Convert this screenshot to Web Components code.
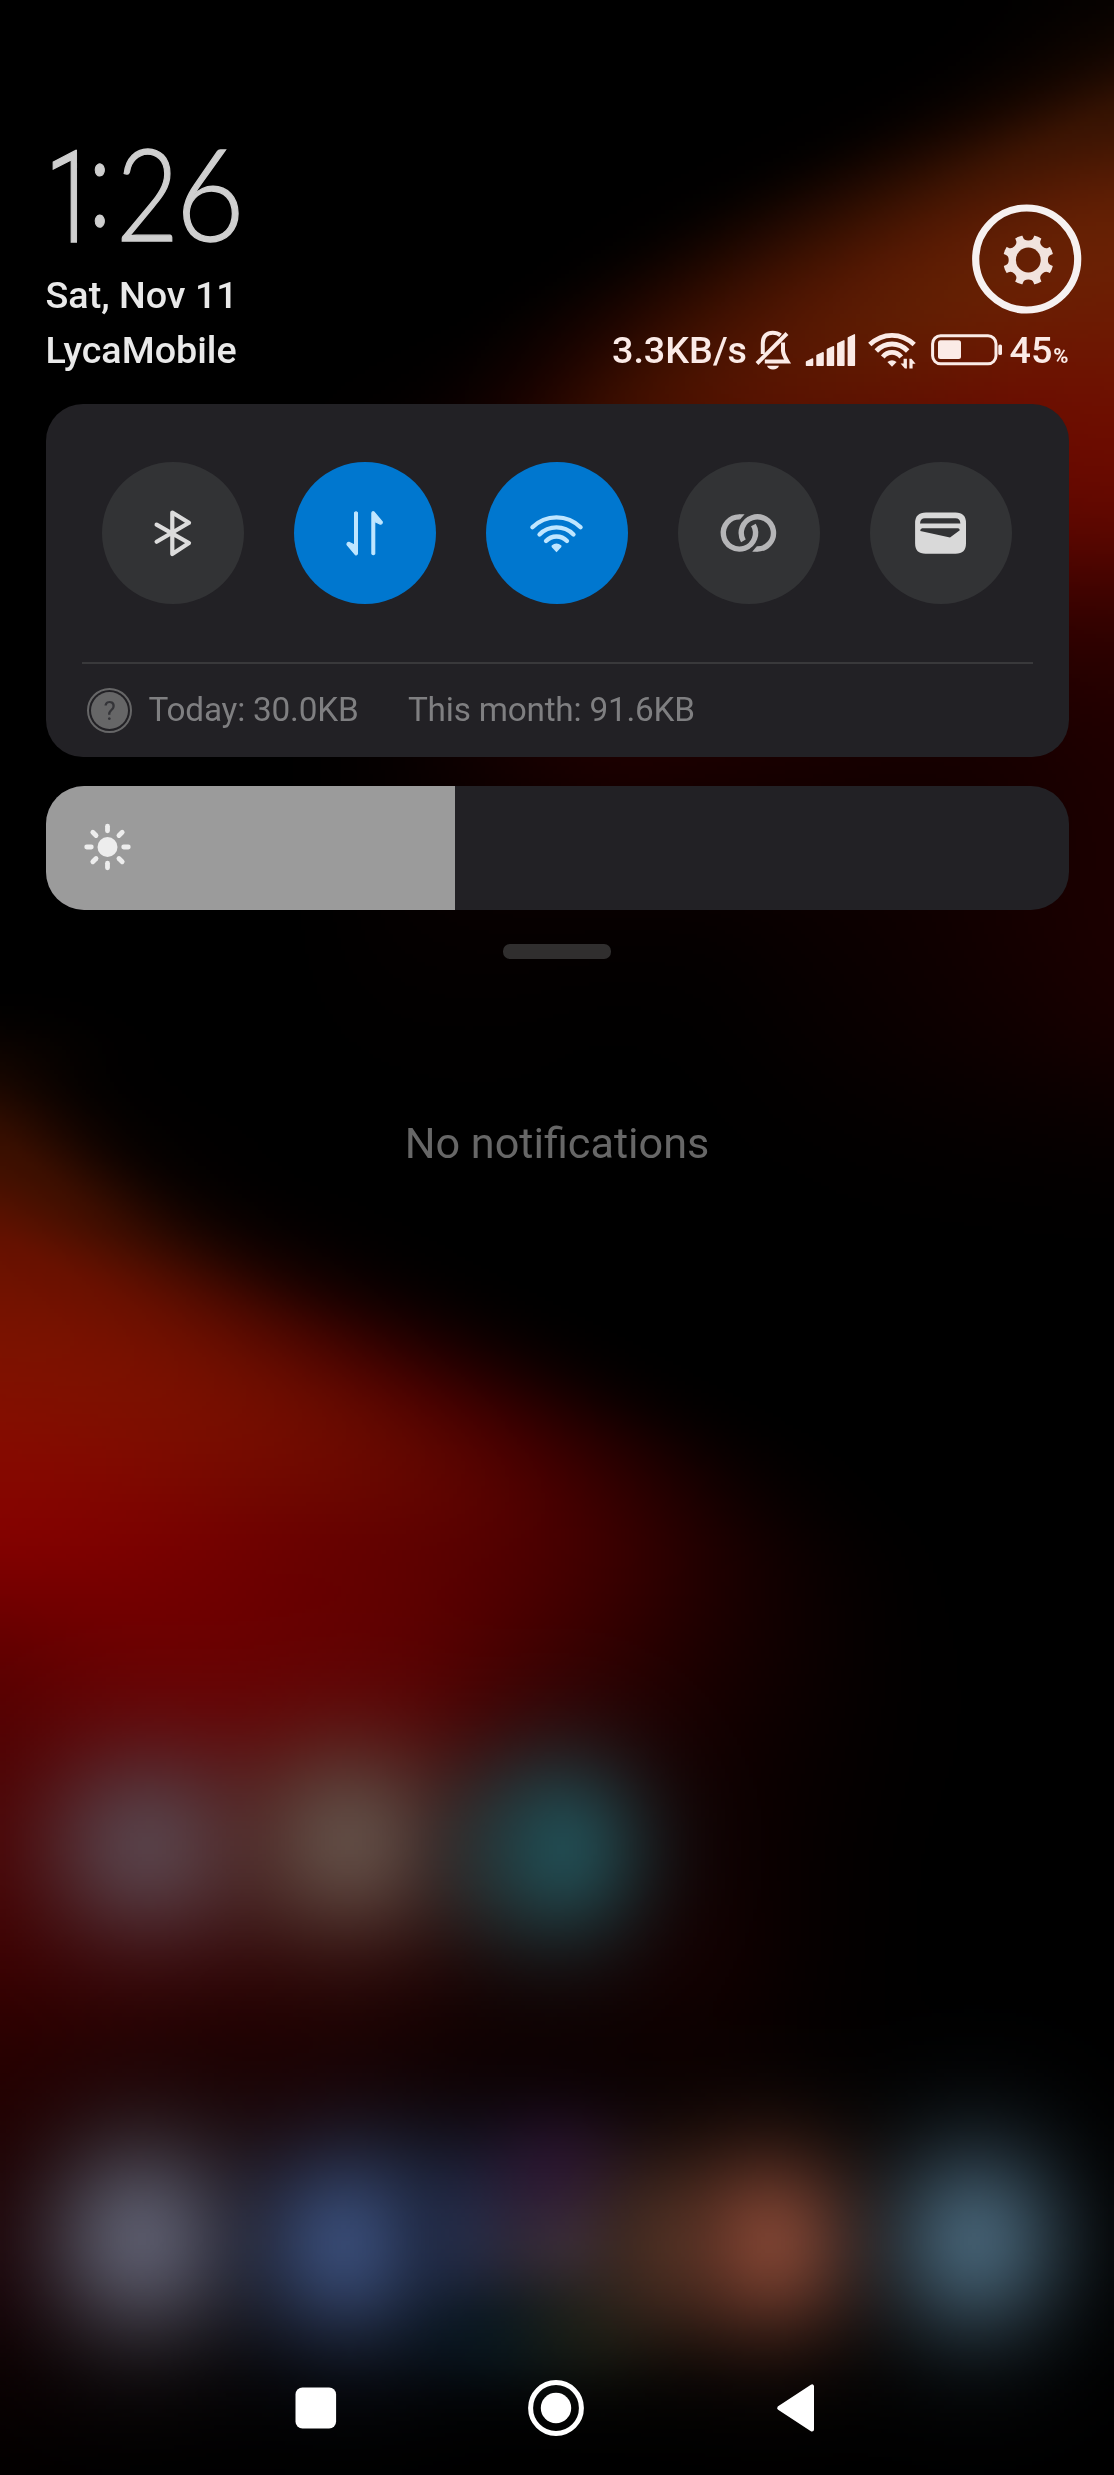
<!DOCTYPE html>
<html lang="en">
<head>
<meta charset="utf-8">
<title>Notification shade</title>
<style>
html,body{margin:0;padding:0;background:#000}
body{width:1114px;height:2475px;overflow:hidden;font-family:Roboto,"Noto Sans",sans-serif}
</style>
</head>
<body>
<shade-screen>
  <shade-header slot="header"></shade-header>
  <toggle-panel slot="content">
    <quick-toggle icon="bluetooth"></quick-toggle>
    <quick-toggle icon="data" on></quick-toggle>
    <quick-toggle icon="wifi" on></quick-toggle>
    <quick-toggle icon="link"></quick-toggle>
    <quick-toggle icon="wallet"></quick-toggle>
    <data-usage slot="footer"><span>Today: 30.0KB</span><span slot="month">This month: 91.6KB</span></data-usage>
  </toggle-panel>
  <brightness-slider slot="content"></brightness-slider>
  <drag-handle slot="content"></drag-handle>
  <empty-note slot="content">No notifications</empty-note>
  <nav-bar slot="nav"></nav-bar>
</shade-screen>
<script>
const define = (name, html, init) => {
  const tpl = document.createElement('template');
  tpl.innerHTML = html;
  customElements.define(name, class extends HTMLElement {
    constructor() {
      super();
      this.attachShadow({mode: 'open'}).appendChild(tpl.content.cloneNode(true));
    }
    connectedCallback() { if (init) init(this, this.shadowRoot); }
  });
};

// Wallpaper glow: a 12-column colour mesh, smoothly interpolated, with soft blobs over it.
const MESH = [
 '000 000 000 000 000 000 000 000 000 000 000 060200',
 '000 000 000 000 000 000 000 000 000 020000 160600 3a1503',
 '000 000 000 000 000 000 000 040100 220a01 431502 5e1d04 692105',
 '000 000 000 000 000 000 180400 3e1000 571803 612003 6c2003 6e1d03',
 '000 000 000 000 040000 180100 401000 551300 5c1200 610f00 6c0c00 6f0e00',
 '000 000 000 000 080000 1c0000 3c0500 4a0500 500500 580500 620700 640800',
 '000 000 000 000 080000 1c0000 300000 300000 300000 300000 320000 320200',
 '000 000 000 000 080000 180000 240000 200000 1c0000 180000 180000 200000',
 '000 000 000 000 060000 0c0000 100000 100000 100000 100000 150000 1c0000',
 '000 000 000 000 050000 060000 050000 050000 0a0000 0e0000 150000 1c0000',
 '000000 000 000 000 010000 010000 000 010000 060000 0b0000 100000 180000',
 '401200 060100 000 000 000 000 000 000 020000 040000 060000 080000',
 '6c1200 4a1000 140400 040000 000 000 000 000 000 000 000 000',
 '7e1300 7b1200 6a0f00 4c0600 280000 0c0000 000 000 000 000 000 000',
 '880c00 840d00 7c0e00 730c00 650800 4c0000 2a0000 0a0000 000 000 000 000',
 '860000 7f0000 750000 680000 600100 550000 400000 220000 0a0000 000 000 000',
 '600000 6b0000 6c0000 660000 5e0000 480000 320000 1c0000 0c0000 010000 000 000',
 '4e0000 5c0000 600000 5a0000 500000 360000 200000 120000 080000 010000 000 000',
 '480000 400000 380000 300000 280000 180000 140000 100000 060000 000 000 000',
 '3c0000 380000 300000 280000 200000 120000 140000 140000 060000 000 000 000',
 '260000 200000 1a0000 1a0000 120000 0c0000 0a0000 0a0000 030000 000 000 000',
 '1c0000 140000 100000 100000 080000 040000 040000 030000 000 000 000 000',
 '180004 100000 060000 040000 000 000 000 000 000 000 000 000',
 '0a0000 060000 030000 000 000 000 000 000 000 000 000 000',
 '020000 000 000 000 000 000 000 000 000 000 000 000'
].map(r => r.split(' ').map(h => h.length < 6 ? [0,0,0] : [0,2,4].map(k => parseInt(h.substr(k,2),16))));
// Columns the glow's edge drifts sideways per mesh row: [row, drift]
const DRIFT = [[0,-1],[1.5,-1.8],[2.5,-1.6],[3.5,-.9],[4.5,-.2],[5,0],[10,0],[10.7,.5],[11.5,1.2],[12.5,1.8],[13.5,1.7],[14.5,.8],[15.5,0],[25,0]];
const drift = y => {
  let i = 0;
  while (y > DRIFT[i+1][0]) i++;
  const t = (y-DRIFT[i][0])/(DRIFT[i+1][0]-DRIFT[i][0]);
  return DRIFT[i][1] + (DRIFT[i+1][1]-DRIFT[i][1])*t*t*(3-2*t);
};
// x, y, spread x, spread y, r, g, b, strength
const BLOBS = [
 [145,1845,78,72,88,66,74,.95],[348,1840,78,74,98,78,70,.95],[490,1850,50,60,48,54,54,.45],[562,1848,64,70,33,75,81,.97],
 [140,2238,72,74,90,90,106,.97],[348,2243,74,74,57,76,118,.97],
 [470,2235,58,64,34,48,82,.75],[565,2245,60,60,62,50,66,.85],[556,2165,54,46,54,22,64,.45],[500,2335,60,36,4,24,34,.6],
 [585,2325,56,44,30,36,18,.5],[660,2245,54,64,70,46,32,.75],
 [770,2242,68,70,124,66,49,.97],[975,2240,68,72,67,94,112,.97]
];
define('wall-paper', `<style>
:host{display:block}canvas{display:block;width:100%;height:100%}
</style><canvas width="279" height="619"></canvas>`, (el, root) => {
  const c = root.querySelector('canvas'), g = c.getContext('2d'), W = c.width, H = c.height;
  const img = g.createImageData(W, H), R = MESH.length, C = 12;
  const cl = (v, m) => Math.max(0, Math.min(m, v));
  // blend of Catmull-Rom and B-spline weights
  const w = t => {
    const t2=t*t,t3=t2*t;
    const a=[(-t3+2*t2-t)/2,(3*t3-5*t2+2)/2,(-3*t3+4*t2+t)/2,(t3-t2)/2];
    const b=[(1-3*t+3*t2-t3)/6,(3*t3-6*t2+4)/6,(-3*t3+3*t2+3*t+1)/6,t3/6];
    return a.map((v,i)=>v*.25+b[i]*.75);
  };
  for (let y=0;y<H;y++) {
    const fy=y/(H-1)*(R-1), iy=Math.min(R-2,Math.floor(fy)), wy=w(fy-iy), k0=drift(fy);
    for (let x=0;x<W;x++) {
      const p=[0,0,0];
      for (let a=0;a<4;a++) {
        const r=iy+a-1, fx=cl(x/(W-1)*(C-1)-k0*(fy-r),C-1);
        const ix=Math.min(C-2,Math.floor(fx)), wx=w(fx-ix), row=MESH[cl(r,R-1)];
        for (let b=0;b<4;b++) {
          const m=row[cl(ix+b-1,C-1)], k=wy[a]*wx[b];
          p[0]+=m[0]*k; p[1]+=m[1]*k; p[2]+=m[2]*k;
        }
      }
      const X=x*4, Y=y*4;
      if (Y>1500) for (const q of BLOBS) {
        const dx=(X-q[0])/q[2], dy=(Y-q[1])/q[3], al=q[7]*Math.exp(-(dx*dx+dy*dy)/2);
        for (let k=0;k<3;k++) p[k]+=(q[4+k]-p[k])*al;
      }
      const o=(y*W+x)*4;
      img.data[o]=p[0]; img.data[o+1]=p[1]; img.data[o+2]=p[2]; img.data[o+3]=255;
    }
  }
  g.putImageData(img,0,0);
});

define('shade-screen', `<style>
:host{display:block;position:relative;width:1114px;height:2475px;overflow:hidden;background:#000}
wall-paper{position:absolute;inset:0}
.col{position:relative;display:flex;flex-direction:column;height:100%;padding:0 45.5px;box-sizing:border-box}
.grow{flex:1}
</style><wall-paper></wall-paper><div class="col"><slot name="header"></slot><slot name="content"></slot><div class="grow"></div><slot name="nav"></slot></div>`);

// Each numeral is squeezed to its own ink width (data-w) so the clock keeps its narrow geometric look.
define('clock-face', `<style>
:host{display:flex;color:#cfcfcf;font:300 128px/130px Lato,sans-serif;height:130px;white-space:nowrap}
span{display:block;transform-origin:0 0;-webkit-text-stroke:1.3px #cfcfcf}
.one{font-family:Roboto,sans-serif;margin-left:7px;padding-top:6px}
.colon{margin-left:18px;margin-top:-15px}
.two{margin-left:17px}.six{margin-left:11px}
</style><span class="one" data-w="24">1</span><span class="colon" data-w="10">:</span><span class="two" data-w="50">2</span><span class="six" data-w="56">6</span>`,
(el, root) => {
  const g = document.createElement('canvas').getContext('2d');
  for (const s of root.querySelectorAll('span')) {
    g.font = '300 128px ' + (s.className === 'one' ? 'Roboto' : 'Lato');
    const m = g.measureText(s.textContent), left = -m.actualBoundingBoxLeft;
    const ink = m.actualBoundingBoxRight - left, want = +s.dataset.w;
    s.style.width = want + 'px';
    s.style.transform = `scaleX(${want / ink})`;
    s.style.textIndent = -left + 'px';
  }
});

define('settings-button', `<style>
:host{display:block;width:110px;height:110px}svg{display:block}
</style><svg width="110" height="110" viewBox="0 0 110 110">
<circle cx="54.7" cy="55" r="51" fill="none" stroke="#f6f1f1" stroke-width="7.2"/>
<mask id="m"><rect width="110" height="110" fill="#000"/><circle cx="56.3" cy="56" r="25.3" fill="#fff"/>
<g class="n" fill="#000"></g><circle cx="56.3" cy="56" r="12.4" fill="#000"/></mask>
<rect width="110" height="110" fill="#f1e3de" mask="url(#m)"/></svg>`, (el, root) => {
  root.querySelector('.n').innerHTML = [...Array(8)].map((_,i) =>
    `<path transform="rotate(${i*45} 56.3 56)" d="M49.3 29H63.3L61.6 33.2Q60.6 36.4 56.3 36.4T51 33.2Z"/>`).join('');
});

define('status-icons', `<style>
:host{display:flex;align-items:center;height:52px;color:#fbebe7;font:500 37.7px/52px Roboto,sans-serif;white-space:nowrap}
svg{display:block;flex:none}
.bell{margin-left:7.5px}.sig{margin-left:12px}.wifi{margin-left:11px}.bat{margin-left:13px}
.pct{margin-left:7px;height:52px}.pct small{font-size:20.5px;font-weight:700;line-height:0;margin-left:1px}
</style><span>3.3KB/s</span>
<svg class="bell" width="38" height="42" viewBox="0 0 38 42" fill="none" stroke="currentColor" stroke-width="4"><path d="M32 4.5L2 34.5"/><path d="M7.8 25V14C7.8 7 12 3.8 17.7 3.8Q22.5 3.8 25.6 6.4"/><path d="M28 13.5V22Q28.5 26 32.5 32.5H9.8"/><path d="M12 36.8H24Q22.5 40.6 18 40.6T12 36.8Z" fill="currentColor" stroke="none"/></svg>
<svg class="sig" width="51" height="42" viewBox="0 0 51 42" fill="currentColor" stroke="currentColor" stroke-width="1.4" stroke-linejoin="round"><path d="M1.5 33L7.6 30V36.2H1.5ZM12 26.5L18.1 23.7V36.2H12ZM22.4 20.5L28.5 17.7V36.2H22.4ZM32.8 14.7L38.9 11.8V36.2H32.8ZM43.3 8.8L49.4 5.8V36.2H43.3Z"/></svg>
<svg class="wifi" width="51" height="42" viewBox="0 0 51 42" fill="none" stroke="currentColor" stroke-width="4.8"><path d="M2.8 15.6Q12.5 6.3 25 6.3T47.2 15.6"/><path d="M9.3 22Q16 15 25 15T40.7 22"/><path d="M15.8 28Q19.5 23.4 25 23.4T34.2 28"/><path d="M20.4 33Q25 29.6 29.6 33L25 37.8Z" fill="currentColor" stroke="none"/><path d="M39.9 29.8V39.4H37.9L33.6 34.4H36.6V29.8ZM42.4 39.4V29.8H44.4L48.6 34.8H45.6V39.4Z" fill="currentColor" stroke="none"/></svg>
<svg class="bat" width="72" height="42" viewBox="0 0 72 42"><rect x="1.6" y="6.8" width="63.4" height="28" rx="8" fill="none" stroke="currentColor" stroke-width="3"/><rect x="7" y="11.3" width="23" height="18.7" rx="2.5" fill="currentColor"/><rect x="67.3" y="15.5" width="3.7" height="10.5" rx="1.5" fill="currentColor"/></svg>
<span class="pct">45<small>%</small></span>`);

define('shade-header', `<style>
:host{display:flex;flex-direction:column;height:404px;color:#e9e9e9;font:500 37.7px/52px Roboto,sans-serif}
.top{display:flex;justify-content:space-between;align-items:flex-end;height:324px;margin-right:-13px}
.left{display:flex;flex-direction:column}
settings-button{margin-bottom:10px}
.date{height:52px;margin-top:12px;margin-bottom:3px}
.row{display:flex;justify-content:space-between;align-items:center;height:52px}
</style><div class="top"><div class="left"><clock-face></clock-face><div class="date">Sat, Nov 11</div></div><settings-button></settings-button></div>
<div class="row"><span>LycaMobile</span><status-icons></status-icons></div>`);

define('toggle-panel', `<style>
:host{display:flex;flex-direction:column;flex:none;box-sizing:border-box;height:353px;border-radius:37px;background:#222125;padding:58px 36px 0}
.row{display:flex;justify-content:space-between;padding:0 20.5px}
hr{border:0;height:2px;width:100%;background:#39393b;margin:58px 0 0}
</style><div class="row"><slot></slot></div><hr><slot name="footer"></slot>`);

const ICONS = {
  bluetooth:`<path stroke="#dcdcdc" stroke-width="4.2" d="M54.6 62.6L87 81L70.3 92V50.5L87 60.8L54.6 79.8"/>`,
  data:`<g fill="#bfe6ff" stroke="#bfe6ff" stroke-width="1"><path d="M60.6 50.7Q62 49.2 63.4 50.7V91.5Q62.9 93.6 61.2 92.4L53 82.5Q53 80.2 55 80.4L60.6 83Z" stroke-width="1.2"/><path d="M80.7 91.8Q79.3 93.3 77.9 91.8V51Q78.4 48.9 80.1 50.1L88.3 60Q88.3 62.3 86.3 62.1L80.7 59.5Z" stroke-width="1.2"/></g>`,
  wifi:`<g stroke="#bfe6ff" stroke-width="4.3"><path d="M46.4 65.3A34 34 0 0 1 94.6 65.3"/><path d="M53.5 72.4A24 24 0 0 1 87.5 72.4"/><path d="M60 79A14.5 14.5 0 0 1 81 79"/></g><path d="M65.6 83.6Q70.5 79.2 75.4 83.6V85L70.5 90.3L65.6 85Z" fill="#bfe6ff"/>`,
  link:`<g stroke="#b5b5b7" stroke-width="5.4" stroke-linecap="butt"><path d="M62 54.9A16.1 16.1 0 1 0 75.4 63"/><path d="M78.8 87A16.1 16.1 0 1 0 65.4 78.9"/></g><path fill="#b5b5b7" d="M61.5 52.2H66.6L62 57.6ZM79.3 89.7H74.2L78.8 84.3Z"/>`,
  wallet:`<path fill="#d9d9d9" fill-rule="evenodd" d="M56 50.4H85.5Q96 50.4 96 60.9V81.2Q96 91.7 85.5 91.7H55.6Q45.1 91.7 45.1 81.2V60.9Q45.1 50.4 56 50.4ZM50 61.4H90.4Q90 56.3 85.5 56.3H55Q50.4 56.3 50 61.4ZM52 66.2Q49.8 67.4 50.3 69L80 75.6L89.8 68.2Q89.6 66.2 88 66.2Z"/>`
};
define('quick-toggle', `<style>
:host{display:block;width:142px;height:142px;border-radius:50%;background:#323335}
:host([on]){background:#0077cf}
svg{display:block}
</style><svg width="142" height="142" viewBox="0 0 142 142" fill="none" stroke-linecap="round" stroke-linejoin="round"></svg>`,
(el, root) => { root.querySelector('svg').innerHTML = ICONS[el.getAttribute('icon')]; });

define('data-usage', `<style>
:host{display:flex;align-items:center;height:92px;color:#7f7f81;font:400 33.3px/92px Roboto,sans-serif;letter-spacing:-.2px;padding-left:5.5px;white-space:nowrap}
.q{flex:none;display:flex;align-items:center;justify-content:center;box-sizing:border-box;width:45px;height:45px;border-radius:50%;border:2.5px solid #666667;margin-right:16.5px}
.q b{display:block;width:37px;height:37px;border-radius:50%;background:#666667;color:#343438;font:400 26px/38px Roboto,sans-serif;text-align:center}
.m{margin-left:49.5px}
</style><span class="q"><b>?</b></span><slot></slot><span class="m"><slot name="month"></slot></span>`);

define('brightness-slider', `<style>
:host{display:block;flex:none;height:124px;margin-top:29px;border-radius:38px;background:#222125;overflow:hidden}
.fill{display:flex;align-items:center;width:409.5px;height:124px;background:#9b9b9b}
svg{display:block;margin-left:37.5px}
</style><div class="fill"><svg width="50" height="50" viewBox="-25 -25 50 50"><circle r="10" cx="-.5" cy="-1" fill="#ededed"/><g class="r" transform="translate(-.5 -1)" stroke="#ededed" stroke-width="4.8" stroke-linecap="round"></g></svg></div>`,
(el, root) => {
  root.querySelector('.r').innerHTML = [...Array(8)].map((_,i) => `<path transform="rotate(${i*45})" d="M0 -16.2V-20.8"/>`).join('');
});

define('drag-handle', `<style>:host{display:block;flex:none;align-self:center;width:108px;height:14.5px;border-radius:7px;background:#302e2e;margin-top:34px}</style>`);

define('empty-note', `<style>:host{display:block;flex:none;text-align:center;margin-top:155.5px;color:#676767;font:400 43.2px/60px Roboto,sans-serif}</style><slot></slot>`);

define('nav-bar', `<style>
:host{display:flex;flex:none;align-items:center;height:134px;padding-left:249.5px}
svg{display:block;flex:none}
.h{margin-left:190px}.b{margin-left:191px}
</style><svg width="42" height="42"><rect x=".5" y=".5" width="40.6" height="41" rx="7" fill="#fff"/></svg>
<svg class="h" width="58" height="58" viewBox="-29 -29 58 58"><circle r="25.4" fill="none" stroke="#fff" stroke-width="5"/><circle r="15.2" fill="#fff"/></svg>
<svg class="b" width="40" height="50" viewBox="0 0 40 50"><path d="M3.2 25L36 3.4V46.6Z" fill="#fff" stroke="#fff" stroke-width="4" stroke-linejoin="round"/></svg>`);
</script>
</body>
</html>
